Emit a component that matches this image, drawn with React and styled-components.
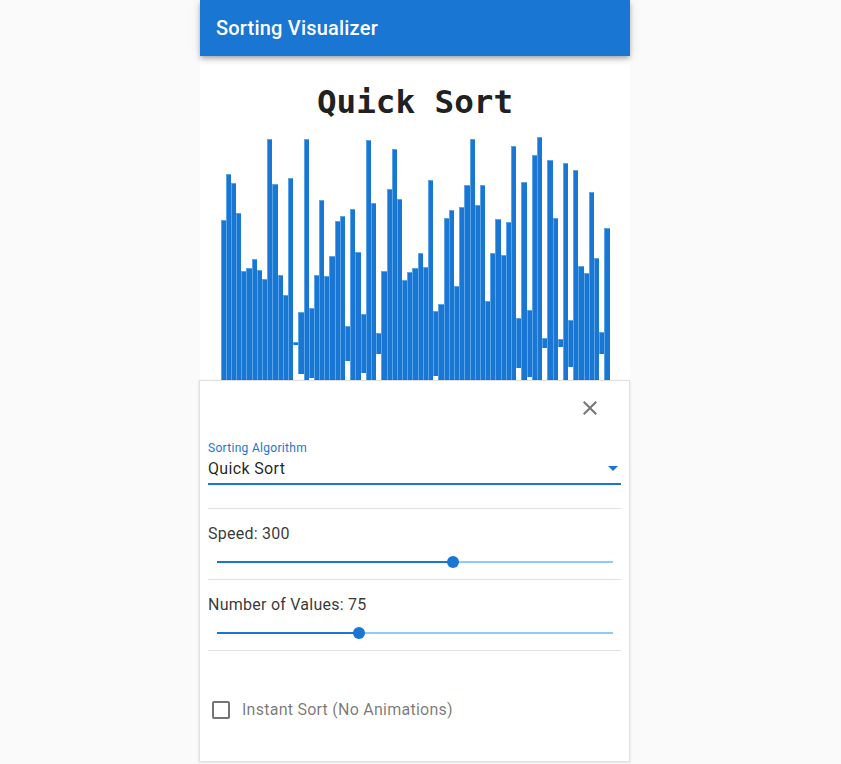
import React from "react";
import styled, { createGlobalStyle } from "styled-components";

const GlobalStyle = createGlobalStyle`
  html, body {
    margin: 0;
    padding: 0;
    background: #fafafa;
    font-family: Roboto, "Liberation Sans", sans-serif;
  }
`;

// heights of the 75 values, read off the picture
const values = [
  246, 338, 320, 260, 145, 151, 168, 146, 129, 408, 318, 136, 97, 330, 3,
  62, 408, 70, 136, 286, 134, 175, 245, 254, 35, 269, 183, 59, 407, 281, 21,
  145, 308, 388, 289, 126, 142, 150, 180, 152, 326, 65, 78, 250, 266, 115,
  272, 316, 408, 276, 316, 85, 180, 248, 176, 243, 395, 50, 323, 67, 376,
  412, 10, 367, 251, 8, 361, 47, 347, 155, 140, 302, 170, 22, 230,
];

export default function App() {
  return (
    <>
      <GlobalStyle />
      <Page>
        <Shell>
          <Column>
            <AppBar>
              <AppTitle>Sorting Visualizer</AppTitle>
            </AppBar>
            <AlgorithmTitle>Quick Sort</AlgorithmTitle>
            <BarArea>
              {values.map((v, i) => (
                <Bar key={i} style={{ height: v }} />
              ))}
            </BarArea>
          </Column>

          <Drawer>
            <CloseRow>
              <CloseButton aria-label="close">
                <svg width="24" height="24" viewBox="0 0 24 24">
                  <path
                    fill="currentColor"
                    d="M19 6.41 17.59 5 12 10.59 6.41 5 5 6.41 10.59 12 5 17.59 6.41 19 12 13.41 17.59 19 19 17.59 13.41 12z"
                  />
                </svg>
              </CloseButton>
            </CloseRow>

            <SelectField>
              <SelectLabel>Sorting Algorithm</SelectLabel>
              <SelectValue>
                <span>Quick Sort</span>
                <svg width="24" height="24" viewBox="0 0 24 24">
                  <path fill="#1976d2" d="M7 10l5 5 5-5z" />
                </svg>
              </SelectValue>
            </SelectField>

            <Divider />

            <ControlBlock>
              <ControlLabel>Speed: 300</ControlLabel>
              <Slider value={59.6} />
            </ControlBlock>

            <Divider />

            <ControlBlock>
              <ControlLabel>Number of Values: 75</ControlLabel>
              <Slider value={35.9} />
            </ControlBlock>

            <Divider />

            <CheckRow>
              <CheckBox />
              <CheckLabel>Instant Sort (No Animations)</CheckLabel>
            </CheckRow>
          </Drawer>
        </Shell>
      </Page>
    </>
  );
}

function Slider({ value }) {
  return (
    <SliderWrap>
      <Rail />
      <Track style={{ width: value + "%" }} />
      <Thumb style={{ left: value + "%" }} />
    </SliderWrap>
  );
}

const Page = styled.div`
  min-height: 764px;
  display: flex;
  justify-content: center;
  padding-right: 11px;
`;

const Shell = styled.div`
  position: relative;
  width: 430px;
`;

const Column = styled.div`
  width: 430px;
  min-height: 764px;
  background: #fff;
  display: flex;
  flex-direction: column;
  align-items: center;
`;

const AppBar = styled.header`
  width: 100%;
  height: 56px;
  box-sizing: border-box;
  padding: 0 16px;
  display: flex;
  align-items: center;
  background: #1976d2;
  box-shadow: 0 2px 4px -1px rgba(0, 0, 0, 0.2), 0 4px 5px 0 rgba(0, 0, 0, 0.14),
    0 1px 10px 0 rgba(0, 0, 0, 0.12);
  position: relative;
  z-index: 1;
`;

const AppTitle = styled.h1`
  margin: 0;
  color: #fff;
  font-family: Roboto, sans-serif;
  font-weight: 500;
  font-size: 20px;
  letter-spacing: 0.2px;
`;

const AlgorithmTitle = styled.h2`
  margin: 26px 0 0;
  height: 46px;
  line-height: 40px;
  font-family: "DejaVu Sans Mono", "Liberation Mono", monospace;
  font-weight: bold;
  font-size: 32.6px;
  color: #212121;
`;

const BarArea = styled.div`
  width: 389px;
  height: 430px;
  display: flex;
  align-items: center;
`;

const Bar = styled.div`
  flex: 1;
  background: #1976d2;
  box-shadow: inset 1px 1px 0 rgba(144, 202, 249, 0.55);
`;

const Drawer = styled.aside`
  position: absolute;
  top: 380px;
  left: -1px;
  width: 431px;
  height: 382px;
  box-sizing: border-box;
  padding: 0 8px;
  background: #fff;
  border: 1px solid #e0e0e0;
  box-shadow: 0 1px 3px rgba(0, 0, 0, 0.12);
  display: flex;
  flex-direction: column;
  font-family: Roboto, sans-serif;
  letter-spacing: 0.25px;
`;

const CloseRow = styled.div`
  display: flex;
  justify-content: flex-end;
  padding: 15px 19px 0 0;
`;

const CloseButton = styled.div`
  width: 24px;
  height: 24px;
  color: #757575;
  display: flex;
`;

const SelectField = styled.div`
  margin: 21px 0 23px;
  display: flex;
  flex-direction: column;
  border-bottom: 2px solid #1976d2;
`;

const SelectLabel = styled.label`
  font-size: 12px;
  line-height: 14px;
  color: #1976d2;
  letter-spacing: 0.3px;
`;

const SelectValue = styled.div`
  display: flex;
  align-items: center;
  justify-content: space-between;
  height: 26px;
  padding-bottom: 2px;
  font-size: 16px;
  letter-spacing: 0.35px;
  color: rgba(0, 0, 0, 0.87);

  svg {
    margin-right: -4px;
  }
`;

const Divider = styled.hr`
  margin: 0;
  border: none;
  height: 1px;
  background: #e0e0e0;
  flex-shrink: 0;
`;

const ControlBlock = styled.div`
  display: flex;
  flex-direction: column;
  padding: 16px 0 0;
  height: 70px;
  box-sizing: border-box;
`;

const ControlLabel = styled.div`
  font-size: 16px;
  line-height: 18px;
  color: rgba(0, 0, 0, 0.8);
`;

const SliderWrap = styled.div`
  position: relative;
  margin: 12px 8px 0 9px;
  height: 14px;
`;

const Rail = styled.div`
  position: absolute;
  left: 0;
  right: 0;
  top: 6px;
  height: 2px;
  background: #90caf9;
`;

const Track = styled.div`
  position: absolute;
  left: 0;
  top: 6px;
  height: 2px;
  background: #1976d2;
`;

const Thumb = styled.div`
  position: absolute;
  top: 1px;
  width: 12px;
  height: 12px;
  margin-left: -6px;
  border-radius: 50%;
  background: #1976d2;
`;

const CheckRow = styled.label`
  display: flex;
  align-items: center;
  margin-top: 49px;
  padding-left: 4px;
`;

const CheckBox = styled.span`
  width: 18px;
  height: 18px;
  box-sizing: border-box;
  border: 2px solid #757575;
  border-radius: 2px;
`;

const CheckLabel = styled.span`
  margin-left: 12px;
  font-size: 16px;
  color: rgba(0, 0, 0, 0.54);
`;
